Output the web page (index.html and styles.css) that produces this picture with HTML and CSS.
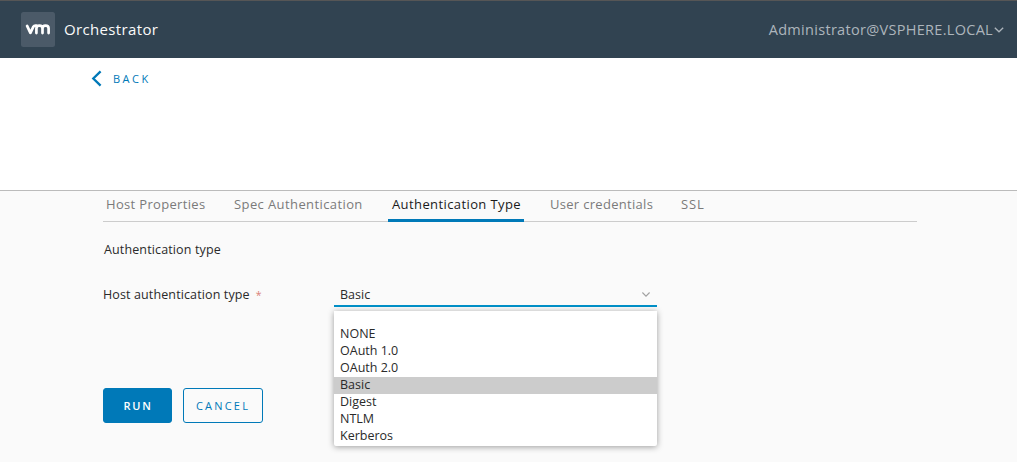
FILE: index.html
```html
<!DOCTYPE html>
<html lang="en">
<head>
<meta charset="utf-8">
<title>Orchestrator</title>
<link rel="stylesheet" href="styles.css">
</head>
<body>
<header class="header">
  <div class="brand">
    <svg class="logo" viewBox="0 0 34 35" width="34" height="35" aria-label="vm">
      <rect width="34" height="35" rx="2.5" fill="#4b5a68"/>
      <path d="M6.1 13.9 L9.4 20.9 L12.4 14.6 Q13.2 13.2 15.4 13.6 M15.4 21.1 V16.4 Q15.4 13.6 18.4 13.6 Q21.5 13.6 21.5 16.4 V21.1 M21.5 16.4 Q21.5 13.6 24.5 13.6 Q27.6 13.6 27.6 16.4 V21.1" fill="none" stroke="#fff" stroke-width="2.7" stroke-linecap="round" stroke-linejoin="round"/>
    </svg>
    <span class="product">Orchestrator</span>
  </div>
  <div class="user">
    <span class="user-name">Administrator@VSPHERE.LOCAL</span>
    <svg width="10" height="6" viewBox="0 0 10 6"><path d="M.8.8 5 4.8 9.2.8" fill="none" stroke="#adb5bc" stroke-width="1.3"/></svg>
  </div>
</header>
<nav class="back-bar">
  <a class="back">
    <svg width="11" height="17" viewBox="0 0 11 17"><path d="M9.6 1.4 2.3 8.5 9.6 15.6" fill="none" stroke="#0079b8" stroke-width="2.3"/></svg>
    <span class="back-label">BACK</span>
  </a>
</nav>
<main class="content">
  <ul class="tabs">
    <li class="tab tab-host">Host Properties</li>
    <li class="tab tab-spec">Spec Authentication</li>
    <li class="tab tab-type active">Authentication Type</li>
    <li class="tab tab-user">User credentials</li>
    <li class="tab tab-ssl">SSL</li>
  </ul>
  <h2 class="section-title">Authentication type</h2>
  <div class="field">
    <label class="field-label">Host authentication type<span class="required">*</span></label>
    <div class="select">
      <span>Basic</span>
      <svg width="8" height="5" viewBox="0 0 8 5"><path d="M.4.5 4 4.1 7.6.5" fill="none" stroke="#a0a0a0" stroke-width="1.1"/></svg>
      <ul class="menu">
        <li class="option blank"></li>
        <li class="option">NONE</li>
        <li class="option">OAuth 1.0</li>
        <li class="option">OAuth 2.0</li>
        <li class="option selected">Basic</li>
        <li class="option">Digest</li>
        <li class="option">NTLM</li>
        <li class="option">Kerberos</li>
      </ul>
    </div>
  </div>
  <div class="actions">
    <button class="btn primary">RUN</button>
    <button class="btn outline">CANCEL</button>
  </div>
</main>
</body>
</html>
```
FILE: styles.css
```css
* { box-sizing: border-box; }
body {
  margin: 0;
  height: 462px;
  overflow: hidden;
  display: flex;
  flex-direction: column;
  background: #fff;
  color: #2a2a2a;
  font-family: "Open Sans", "Noto Sans", sans-serif;
  font-size: 12.5px;
}
ul { list-style: none; margin: 0; padding: 0; }
svg { display: block; flex: none; }

.header {
  height: 58px;
  display: flex;
  justify-content: space-between;
  align-items: center;
  padding: 0 13px 0 21px;
  border-top: 1px solid #565656;
  background: #314351;
}
.brand { display: flex; align-items: center; gap: 9px; }
.product { color: #fafafa; font-size: 15px; letter-spacing: .35px; line-height: 20px; padding-bottom: 1px; }
.user { display: flex; align-items: center; gap: 1px; color: #adb5bc; }
.user-name { font-size: 14.5px; letter-spacing: .3px; line-height: 20px; }

.back-bar { height: 132px; padding: 12px 0 0 91px; }
.back { display: inline-flex; align-items: center; gap: 11px; color: #0079b8; }
.back-label { font-size: 11px; letter-spacing: 2.5px; line-height: 17px; }

.content {
  flex: 1;
  border-top: 1px solid #bbb;
  background: #fafafa;
  padding-left: 103px;
}
.tabs {
  display: flex;
  gap: 21px;
  width: 814px;
  height: 31px;
  border-bottom: 1px solid #ccc;
}
.tab {
  height: 31px;
  padding: 3px 4px 0;
  font-size: 13px;
  letter-spacing: .4px;
  line-height: 20px;
  white-space: nowrap;
  color: #7a7a7a;
}
.tab-host { width: 107px; padding-left: 3px; letter-spacing: .33px; }
.tab-spec { width: 136px; padding-left: 3px; }
.tab-type { width: 136px; }
.tab-user { width: 111px; padding-left: 5px; letter-spacing: .3px; }
.tab-ssl { letter-spacing: .9px; }
.tab.active { color: #1a1a1a; border-bottom: 3px solid #0079b8; }
.section-title { margin: 18px 0 0; padding-left: 1px; font-size: 12.5px; font-weight: 400; letter-spacing: .13px; line-height: 20px; }
.field { display: flex; margin-top: 23px; }
.field-label { width: 231px; line-height: 24px; letter-spacing: .12px; }
.required { margin-left: 6px; color: #d98078; font-size: 10.5px; }
.select {
  position: relative;
  display: flex;
  justify-content: space-between;
  align-items: center;
  width: 323px;
  height: 24px;
  padding: 0 7px 0 6px;
  border-bottom: 2px solid #0090c8;
}
.menu {
  position: absolute;
  top: 28px;
  left: 0;
  width: 323px;
  height: 135px;
  padding-bottom: 1px;
  background: #fff;
  border-radius: 0 0 2px 2px;
  box-shadow: 0 1px 6px rgba(0, 0, 0, .38);
}
.option { height: 17px; padding-left: 6px; line-height: 15px; }
.blank { height: 15px; }
.selected { background: #ccc; }
.actions { display: flex; gap: 11px; margin-top: 81px; }
.btn {
  height: 35px;
  padding: 0 0 1px 1px;
  border: 1px solid #0079b8;
  border-radius: 3px;
  font: 400 11px "Open Sans", "Noto Sans", sans-serif;
  letter-spacing: 1.7px;
}
.primary { width: 69px; background: #0079b8; color: #fff; font-weight: 600; }
.outline { width: 80px; padding-left: 0; background: transparent; color: #0079b8; letter-spacing: 2.2px; }
```
